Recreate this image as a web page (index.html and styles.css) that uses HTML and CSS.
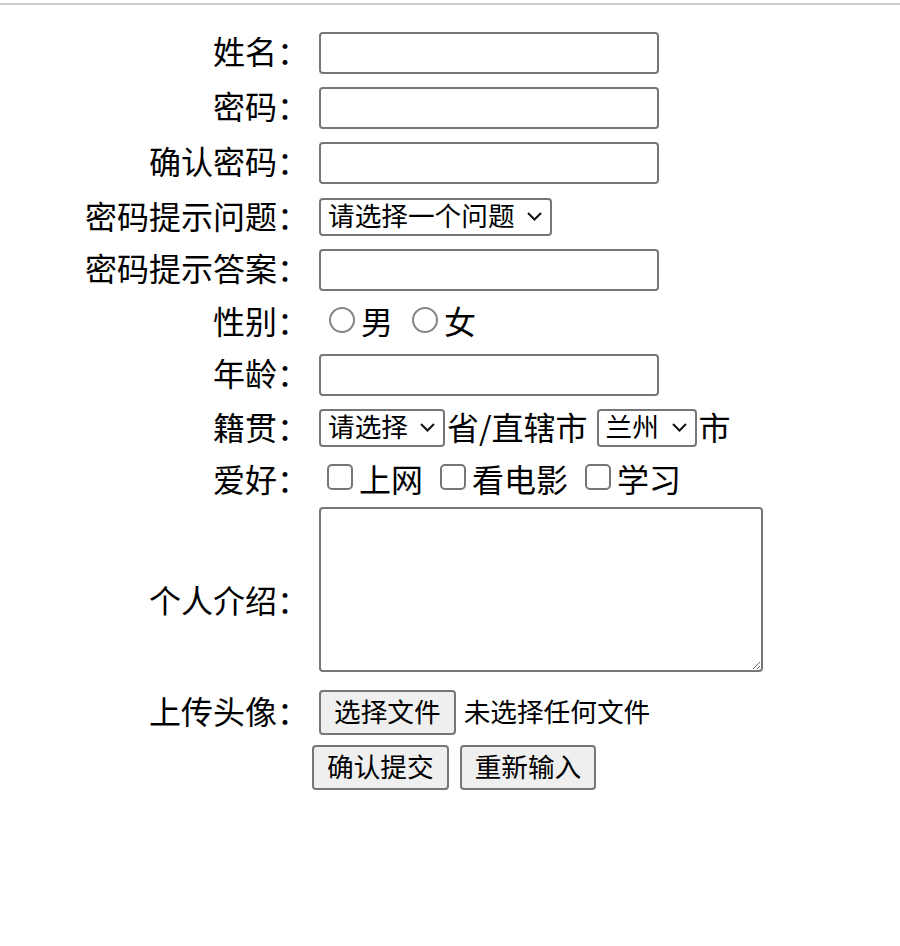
FILE: index.html
```html
<!DOCTYPE html>
<html lang="zh-CN">
<head>
<meta charset="utf-8">
<title>注册</title>
<link rel="stylesheet" href="styles.css">
</head>
<body>
<div class="topline"></div>
<form class="reg">
  <label class="lbl">姓名：</label>
  <div class="ctl"><input class="txt" type="text"></div>

  <label class="lbl">密码：</label>
  <div class="ctl"><input class="txt" type="password"></div>

  <label class="lbl">确认密码：</label>
  <div class="ctl"><input class="txt" type="password"></div>

  <label class="lbl">密码提示问题：</label>
  <div class="ctl">
    <span class="sel-wrap">
      <select class="sel"><option>请选择一个问题</option></select>
      <svg class="chev" width="15" height="9" viewBox="0 0 15 9"><path d="M1 1 L7.5 7.5 L14 1" fill="none" stroke="#111" stroke-width="2"/></svg>
    </span>
  </div>

  <label class="lbl">密码提示答案：</label>
  <div class="ctl"><input class="txt" type="text"></div>

  <label class="lbl">性别：</label>
  <div class="ctl">
    <label class="opt"><input class="radio" type="radio" name="sex">男</label>
    <label class="opt"><input class="radio" type="radio" name="sex">女</label>
  </div>

  <label class="lbl">年龄：</label>
  <div class="ctl"><input class="txt" type="text"></div>

  <label class="lbl">籍贯：</label>
  <div class="ctl">
    <span class="sel-wrap">
      <select class="sel"><option>请选择</option></select>
      <svg class="chev" width="15" height="9" viewBox="0 0 15 9"><path d="M1 1 L7.5 7.5 L14 1" fill="none" stroke="#111" stroke-width="2"/></svg>
    </span>
    <span class="prov">省/直辖市</span>
    <span class="sel-wrap">
      <select class="sel"><option>兰州</option></select>
      <svg class="chev" width="15" height="9" viewBox="0 0 15 9"><path d="M1 1 L7.5 7.5 L14 1" fill="none" stroke="#111" stroke-width="2"/></svg>
    </span>
    <span class="city">市</span>
  </div>

  <label class="lbl">爱好：</label>
  <div class="ctl">
    <label class="opt"><input class="check" type="checkbox">上网</label>
    <label class="opt"><input class="check" type="checkbox">看电影</label>
    <label class="opt"><input class="check" type="checkbox">学习</label>
  </div>

  <label class="lbl lbl-intro">个人介绍：</label>
  <div class="ctl ctl-top"><textarea class="area"></textarea></div>

  <label class="lbl">上传头像：</label>
  <div class="ctl">
    <button class="btn" type="button">选择文件</button>
    <span class="fname">未选择任何文件</span>
  </div>

  <div class="ctl ctl-actions">
    <button class="btn" type="submit">确认提交</button>
    <button class="btn" type="reset">重新输入</button>
  </div>
</form>
</body>
</html>
```

FILE: styles.css
```css
html, body {
  margin: 0;
  padding: 0;
  background: #fff;
}

body {
  font-family: "Noto Sans CJK SC", "Microsoft YaHei", sans-serif;
  color: #000;
  font-size: 32px;
}

.topline {
  margin-top: 3px;
  border-top: 2px solid #cbcbcb;
}

.reg {
  margin-top: 20px;
  display: grid;
  grid-template-columns: 309px 1fr;
  grid-template-rows: 55px 55px 55px 54px 51px 54px 51px 56px 48px 176px 65px 45px;
  column-gap: 10px;
  align-items: center;
}

.lbl {
  text-align: right;
  line-height: 40px;
  padding-bottom: 5px;
  white-space: nowrap;
}

.lbl-intro {
  align-self: start;
  margin-top: 75px;
}

.ctl {
  display: flex;
  align-items: center;
  line-height: 40px;
}

.ctl-top {
  align-self: start;
  padding-top: 3px;
}

.ctl-actions {
  grid-column: 2;
  margin-left: -7px;
  gap: 11px;
}

.txt {
  box-sizing: border-box;
  width: 340px;
  height: 42px;
  margin: 0;
  border: 2px solid #767676;
  border-radius: 4px;
  background: #fff;
  font: inherit;
  font-size: 26.67px;
  padding: 0 4px;
}

.sel-wrap {
  position: relative;
  display: inline-flex;
}

.sel {
  appearance: none;
  -webkit-appearance: none;
  box-sizing: border-box;
  height: 38px;
  margin: 0;
  padding: 0 35px 4px 7px;
  border: 2px solid #767676;
  border-radius: 4px;
  background: #fff;
  color: #000;
  font-family: inherit;
  font-size: 26.67px;
  line-height: 30px;
}

.chev {
  position: absolute;
  right: 10px;
  top: 14px;
  pointer-events: none;
}

.prov {
  margin-left: 2px;
  margin-right: 9px;
  padding-bottom: 5px;
}

.city {
  margin-left: 2px;
  padding-bottom: 5px;
}

.opt {
  display: inline-flex;
  align-items: center;
  padding-bottom: 5px;
}

.opt + .opt {
  margin-left: 9px;
}

.radio {
  appearance: none;
  -webkit-appearance: none;
  box-sizing: border-box;
  width: 26px;
  height: 26px;
  margin: 0 6px 0 10px;
  border: 2px solid #858585;
  border-radius: 50%;
  background: #fff;
}

.check {
  appearance: none;
  -webkit-appearance: none;
  box-sizing: border-box;
  width: 26px;
  height: 26px;
  margin: 0 6px 2px 8px;
  border: 2px solid #767676;
  border-radius: 5px;
  background: #fff;
}

.area {
  box-sizing: border-box;
  display: block;
  width: 444px;
  height: 165px;
  margin: 0;
  border: 2px solid #767676;
  border-radius: 4px;
  font: inherit;
  font-size: 26.67px;
}

.btn {
  box-sizing: border-box;
  height: 45px;
  margin: 0;
  padding: 0 13px 3px;
  border: 2px solid #767676;
  border-radius: 4px;
  background: #efefef;
  color: #000;
  font-family: inherit;
  font-size: 26.67px;
  line-height: 36px;
}

.fname {
  margin-left: 8px;
  font-size: 26.67px;
  padding-bottom: 4px;
}
```
